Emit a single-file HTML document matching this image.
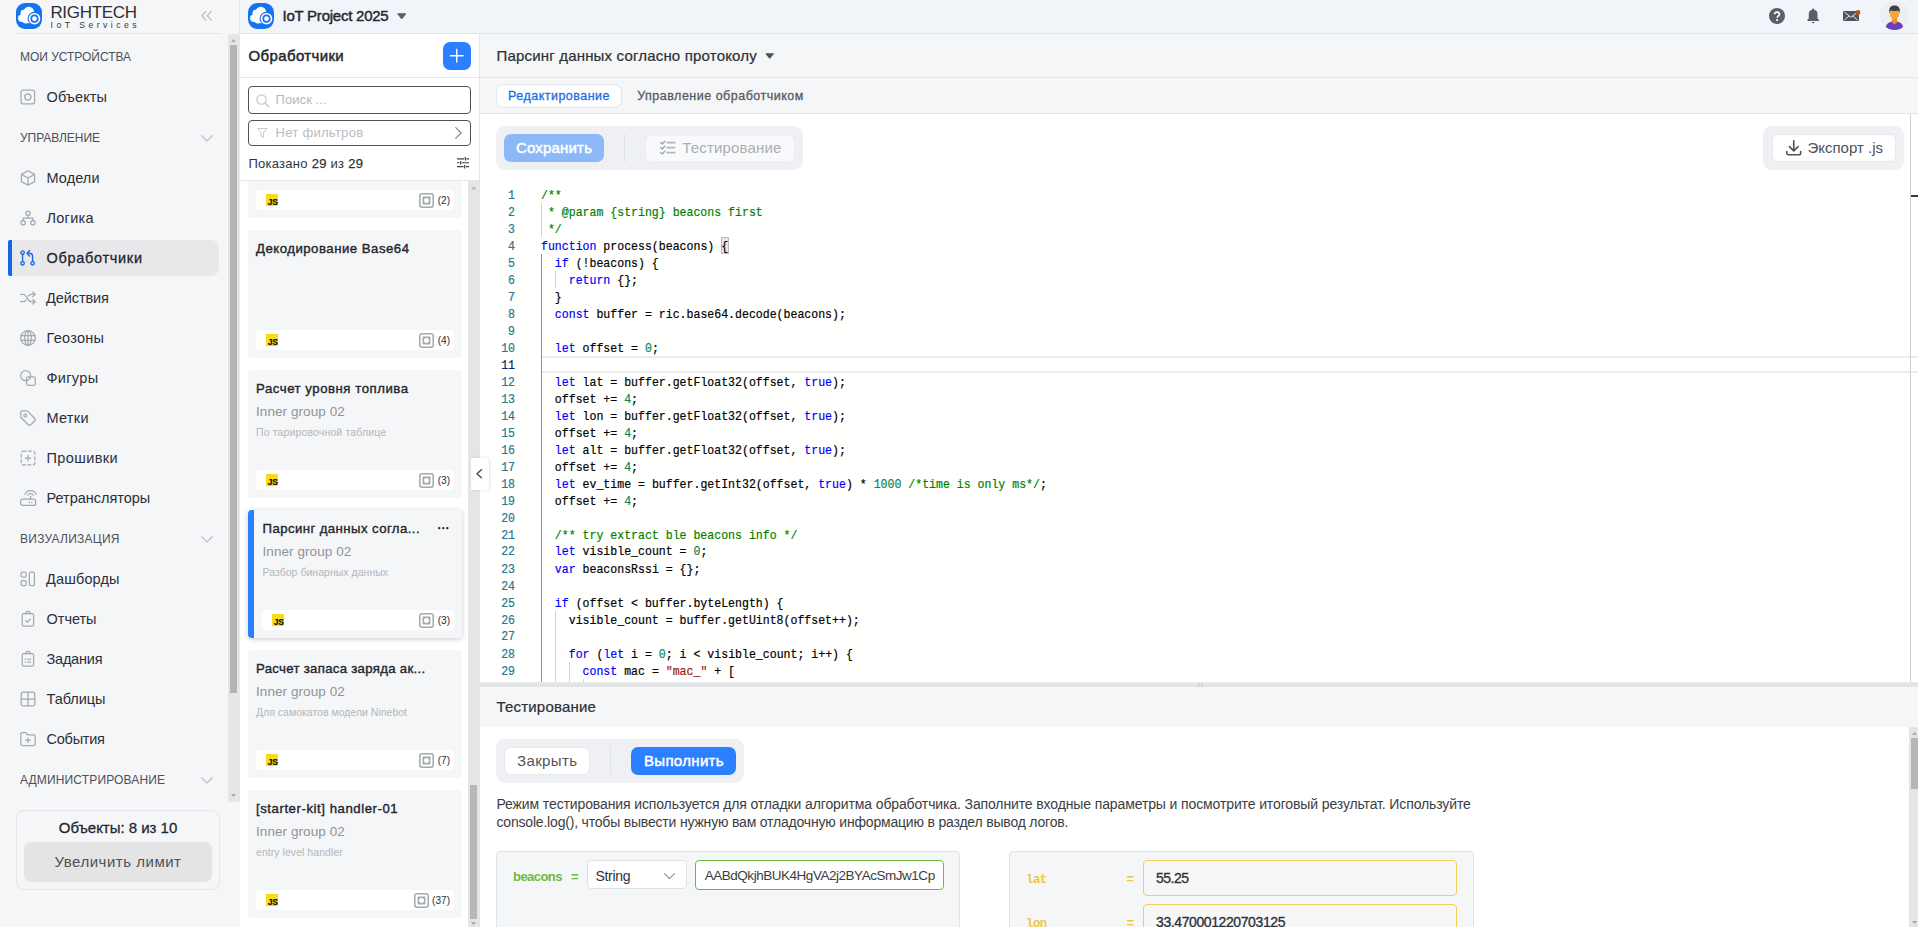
<!DOCTYPE html><html lang="ru"><head>
<meta charset="utf-8">
<title>IoT Project 2025</title>
<style>
*{box-sizing:border-box;margin:0;padding:0}
html,body{width:1918px;height:927px;overflow:hidden;background:#fff}
body{font-family:"Liberation Sans",sans-serif;color:#2b2f38;position:relative;font-size:14px}
.abs{position:absolute}
.t{position:absolute;white-space:nowrap;line-height:1}
svg{display:block;overflow:visible}
/* ---------- sidebar ---------- */
#side{position:absolute;left:0;top:0;width:240px;height:927px;background:#f5f6f8}
.sec{position:absolute;left:20px;font-size:12px;color:#4c5058;white-space:nowrap;line-height:14px;height:14px;transform:scaleY(1.09);transform-origin:0 50%}
.nav{position:absolute;left:46.5px;font-size:14.5px;color:#2b2f38;white-space:nowrap;line-height:16px;height:16px}
.ico{position:absolute;left:20px;width:16px;height:16px;fill:none;stroke:#a4a9af;stroke-width:1.25;stroke-linecap:round;stroke-linejoin:round}
.chev{position:absolute;left:201px;width:12px;height:7px;fill:none;stroke:#bfc3c9;stroke-width:1.3;stroke-linecap:round;stroke-linejoin:round}
/* ---------- topbar ---------- */
#top{position:absolute;left:240px;top:0;width:1678px;height:34px;background:#f1f5f9;border-bottom:1px solid #e2e5e8}
/* ---------- list column ---------- */
#col{position:absolute;left:240px;top:34px;width:240px;height:893px;background:#fff}
.card{position:absolute;left:8px;width:214px;height:127.600px;background:#f5f6f8;border-radius:4px}
.card .ttl{position:absolute;left:8px;top:11px;font-size:13.200px;-webkit-text-stroke:.38px #23262d;color:#23262d;white-space:nowrap;line-height:15px}
.card .grp{position:absolute;left:8px;top:34px;font-size:13.5px;color:#8e9399;white-space:nowrap;line-height:15px}
.card .dsc{position:absolute;left:8px;top:57px;font-size:10.500px;color:#b3b7bc;white-space:nowrap;line-height:11px}
.card .ft{position:absolute;left:8px;right:8px;top:100.250px;height:20px;background:#fff;border-radius:4px}
.card .js{position:absolute;left:10px;top:4px;width:12px;height:12px;background:#f5de19;overflow:hidden}
.card .js b{position:absolute;right:.6px;bottom:.9px;font-size:8.400px;line-height:6.500px;font-weight:bold;color:#111;letter-spacing:-.35px;-webkit-text-stroke:.2px #111}
.card .cnt{position:absolute;right:4px;top:4.500px;font-size:10.100px;line-height:12px;color:#2b2f38;white-space:nowrap}
.card .oi{position:absolute;margin-left:.5px;top:2.800px;width:15px;height:15px;fill:none;stroke:#a3a9ad;stroke-width:1.500}
/* ---------- main ---------- */
#main{position:absolute;left:480px;top:34px;width:1438px;height:893px;background:#fff}
.code{position:absolute;left:0;top:1.100px;transform:scaleY(1.09);transform-origin:0 0;font-family:"Liberation Mono",monospace;font-size:11.565px;line-height:15.596px;white-space:pre;color:#000}
.code,.ln{-webkit-text-stroke-width:.18px}
.k{color:#0000ff}.c{color:#008000}.n{color:#098658}.s{color:#a31515}
.ln{position:absolute;width:35px;left:0;text-align:right;transform:scaleY(1.09);transform-origin:0 0;font-family:"Liberation Mono",monospace;font-size:11.565px;line-height:15.596px;color:#237893;white-space:pre}
.g{position:absolute;width:1px;background:#d3d3d3}
.ga{position:absolute;width:1px;background:#939393}
</style>
</head>
<body>

<!-- ======================= SIDEBAR ======================= -->
<div id="side">
  <!-- logo -->
  <svg class="abs" style="left:16px;top:3px" width="26" height="26" viewBox="0 0 26 26">
    <rect x="0" y="0" width="26" height="26" rx="9" fill="#1673f0"></rect>
    <g fill="#fff"><circle cx="5.800" cy="15.300" r="3.700"></circle><circle cx="7.800" cy="10" r="3.300"></circle><circle cx="12.800" cy="9" r="5.300"></circle><circle cx="10" cy="16.400" r="4.200"></circle><circle cx="14" cy="16" r="4.600"></circle></g>
    <circle cx="18.500" cy="15.700" r="6.900" fill="#1673f0"></circle>
    <circle cx="18.500" cy="15.700" r="4.950" fill="none" stroke="#fff" stroke-width="1.700"></circle>
    <circle cx="18.500" cy="15.700" r="2.400" fill="#fff"></circle>
  </svg>
  <div class="t" style="left: 50.4px; top: 3.6px; font-size: 17px; color: rgb(44, 47, 54); letter-spacing: -0.31px;">RIGHTECH</div>
  <div class="t" style="left: 50.6px; top: 20.7px; font-size: 8.6px; color: rgb(51, 54, 61); letter-spacing: 3.49px;">IoT Services</div>
  <div class="abs" style="left:16px;top:33px;width:206px;height:1px;background:#e3e5e8"></div>
  <svg class="abs" style="left:201.300px;top:10.800px;fill:none;stroke:#b9bdc4;stroke-width:1.2;stroke-linecap:round;stroke-linejoin:round" width="11" height="9.5" viewBox="0 0 11 9.5"><path d="M4.8 .5L.8 4.75l4 4.25M10.2 .5l-4 4.25l4 4.250"></path></svg>

  <!-- scrollbar -->
  <div class="abs" style="left:228px;top:34px;width:12px;height:768px;background:#e5e6e8"></div>
  <div class="abs" style="left:239px;top:0;width:1px;height:34px;background:#e3e6ea"></div>
  <div class="abs" style="left:230px;top:45px;width:7px;height:648px;background:#b4b4b6"></div>
  <svg class="abs" style="left:231px;top:39px" width="5" height="3" viewBox="0 0 5 3"><path d="M0 3L2.5 0L5 3z" fill="#b0b1b3"></path></svg>
  <svg class="abs" style="left:231px;top:794px" width="5" height="3" viewBox="0 0 5 3"><path d="M0 0L2.5 3L5 0z" fill="#a9a9ab"></path></svg>

  <div class="sec" style="top: 49.5px; letter-spacing: -0.03px;">МОИ УСТРОЙСТВА</div>

  <svg class="ico" style="top:89px" viewBox="0 0 16 16"><rect x="1" y="1.200" width="13.6" height="13.6" rx="2"></rect><circle cx="7.8" cy="8" r="3.1"></circle></svg>
  <div class="nav" style="top: 89px; letter-spacing: 0.11px;">Объекты</div>

  <div class="sec" style="top: 130.5px; letter-spacing: -0.06px;">УПРАВЛЕНИЕ</div>
  <svg class="chev" style="top:134.500px" viewBox="0 0 12 7"><path d="M.7 .7L6 6L11.300 .7"></path></svg>

  <svg class="ico" style="top:169.500px" viewBox="0 0 16 16"><path d="M8 .8L14.600 4.400V11.600L8 15.200L1.400 11.600V4.400zM1.600 4.500L8 8L14.400 4.500M8 8V15"></path></svg>
  <div class="nav" style="top: 169.5px; letter-spacing: 0.08px;">Модели</div>

  <svg class="ico" style="top:209.500px" viewBox="0 0 16 16"><circle cx="8" cy="3.200" r="2.200"></circle><circle cx="3.100" cy="12.700" r="2.200"></circle><circle cx="12.900" cy="12.700" r="2.200"></circle><path d="M8 5.400V8M3.100 10.500V8H12.900V10.500"></path></svg>
  <div class="nav" style="top: 209.5px; letter-spacing: 0.26px;">Логика</div>

  <!-- active -->
  <div class="abs" style="left:8px;top:240px;width:211px;height:36px;background:#e8e8ea;border-radius:3px 8px 8px 3px"></div>
  <div class="abs" style="left:8px;top:240px;width:4px;height:36px;background:#1565e6;border-radius:2px 0 0 2px"></div>
  <svg class="ico" style="top:250px;stroke:#1a6ae6;stroke-width:1.4" viewBox="0 0 16 16"><circle cx="2.600" cy="2.600" r="1.700"></circle><circle cx="2.600" cy="13.300" r="1.700"></circle><circle cx="12.600" cy="13.300" r="1.700"></circle><path d="M2.600 4.300V11.600M12.600 11.600V6.500a3.200 3.200 0 0 0-3.200-3.200H7.200M9.600 .6L7 3.300L9.600 6"></path></svg>
  <div class="nav" style="top: 249.5px; color: rgb(35, 38, 45); letter-spacing: 0.7px;"><span style="-webkit-text-stroke:0.3px #23262d">Обработчики</span></div>

  <svg class="ico" style="top:289.500px" viewBox="0 0 16 16"><path d="M.6 4.300H3.200C6.600 4.300 7.400 11.700 11 11.700H15M.6 11.700H3.200C4.400 11.700 5.200 10.900 5.900 9.800M8.300 6.200C9 5.100 9.800 4.300 11 4.300H15M12.800 2L15.200 4.300L12.800 6.600M12.800 9.400L15.200 11.700L12.800 14"></path></svg>
  <div class="nav" style="top: 289.5px; left: 46px; letter-spacing: -0.08px;">Действия</div>

  <svg class="ico" style="top:330px" viewBox="0 0 16 16"><circle cx="8" cy="8" r="7.300"></circle><ellipse cx="8" cy="8" rx="3.300" ry="7.300"></ellipse><path d="M.9 5.600H15.100M.9 10.400H15.100M8 .7V15.300"></path></svg>
  <div class="nav" style="top: 329.5px; letter-spacing: 0.28px;">Геозоны</div>

  <svg class="ico" style="top:369.500px" viewBox="0 0 16 16"><circle cx="5.700" cy="5.700" r="5"></circle><rect x="6.600" y="6.800" width="8.700" height="8.500" rx="1.800"></rect></svg>
  <div class="nav" style="top: 369.5px; letter-spacing: 0.32px;">Фигуры</div>

  <svg class="ico" style="top:409.500px" viewBox="0 0 16 16"><path d="M.8 2.600A1.700 1.700 0 0 1 2.500 .9H6.600a1.700 1.700 0 0 1 1.200 .5L14.700 8.300a1.700 1.700 0 0 1 0 2.400L10.700 14.700a1.700 1.700 0 0 1-2.400 0L1.300 7.800A1.700 1.700 0 0 1 .8 6.600z"></path><circle cx="5.300" cy="5.400" r="1.400"></circle></svg>
  <div class="nav" style="top: 409.5px; letter-spacing: 0.27px;">Метки</div>

  <svg class="ico" style="top:449.500px" viewBox="0 0 16 16"><rect x="1.200" y="1.200" width="13.600" height="13.600" rx="1.800" stroke-dasharray="3 2.440"></rect><path d="M8 5.300V10.700M5.300 8H10.700"></path></svg>
  <div class="nav" style="top: 449.5px; letter-spacing: 0.37px;">Прошивки</div>

  <svg class="ico" style="top:490px" viewBox="0 0 16 16"><rect x=".7" y="9.100" width="14.900" height="6.300" rx="2"></rect><path d="M10.600 9V6.300M5 4.400A6 6 0 0 1 16.200 4.400M7.900 5.200A3 3 0 0 1 13.300 5.200"></path><path d="M9.300 12.300h.01M11.900 12.300h.01" stroke-width="1.600"></path></svg>
  <div class="nav" style="top: 489.5px; letter-spacing: -0.02px;">Ретрансляторы</div>

  <div class="sec" style="top: 531.5px; letter-spacing: 0.25px;">ВИЗУАЛИЗАЦИЯ</div>
  <svg class="chev" style="top:535.500px" viewBox="0 0 12 7"><path d="M.7 .7L6 6L11.300 .7"></path></svg>

  <svg class="ico" style="top:571px" viewBox="0 0 16 16"><rect x="1.100" y="1.200" width="5" height="5" rx="1.400"></rect><rect x="1.100" y="9.600" width="5" height="5" rx="1.400"></rect><rect x="9.400" y="1.200" width="5" height="13.400" rx="1.400"></rect></svg>
  <div class="nav" style="top: 570.5px; left: 46px; letter-spacing: 0.14px;">Дашборды</div>

  <svg class="ico" style="top:610.500px" viewBox="0 0 16 16"><rect x="2.200" y="2.700" width="11.400" height="12.400" rx="1.700"></rect><path d="M5.600 2.700A2.300 2.300 0 0 1 10.200 2.700M5.600 9.600L7.300 11.200L10.500 7.900"></path></svg>
  <div class="nav" style="top: 610.5px; letter-spacing: -0.02px;">Отчеты</div>

  <svg class="ico" style="top:650.500px" viewBox="0 0 16 16"><rect x="2.200" y="2.700" width="11.400" height="12.400" rx="1.700"></rect><path d="M5.600 2.700A2.300 2.300 0 0 1 10.200 2.700M7.600 8.200H10.600M7.600 11.200H10.600"></path><path d="M5.300 8.200h.01M5.300 11.200h.01" stroke-width="1.500"></path></svg>
  <div class="nav" style="top: 650.5px; letter-spacing: -0.22px;">Задания</div>

  <svg class="ico" style="top:690.500px" viewBox="0 0 16 16"><rect x="1.200" y="1.200" width="13.600" height="13.600" rx="1.800"></rect><path d="M8 1.200V14.800M1.200 8H14.800"></path></svg>
  <div class="nav" style="top: 690.5px; letter-spacing: -0.04px;">Таблицы</div>

  <svg class="ico" style="top:730.500px" viewBox="0 0 16 16"><path d="M.8 3.200A1.700 1.700 0 0 1 2.500 1.500H5.600L7.600 3.800H13.500A1.700 1.700 0 0 1 15.200 5.500V12.800A1.700 1.700 0 0 1 13.500 14.500H2.500A1.700 1.700 0 0 1 .8 12.800zM8 6.800V11.600M5.600 9.200H10.400"></path></svg>
  <div class="nav" style="top: 730.5px; letter-spacing: -0.23px;">События</div>

  <div class="sec" style="top: 772.5px; letter-spacing: 0.15px;">АДМИНИСТРИРОВАНИЕ</div>
  <svg class="chev" style="top:776.500px" viewBox="0 0 12 7"><path d="M.7 .7L6 6L11.300 .7"></path></svg>

  <!-- limit box -->
  <div class="abs" style="left:16px;top:810px;width:204px;height:79.500px;border:1px solid #e3e5e8;border-radius:8px"></div>
  <div class="t" style="left: 58.75px; top: 820px; font-size: 15px; color: rgb(35, 38, 45); line-height: 16px; -webkit-text-stroke: 0.28px rgb(35, 38, 45); letter-spacing: -0.02px;">Объекты: 8 из 10</div>
  <div class="abs" style="left:24px;top:842px;width:188px;height:39.500px;background:#e4e4e5;border-radius:7px"></div>
  <div class="t" style="left: 54.5px; top: 853.5px; font-size: 15px; color: rgb(77, 81, 89); line-height: 16px; letter-spacing: 0.52px;">Увеличить лимит</div>
</div>

<!-- ======================= TOP BAR ======================= -->
<div id="top">
  <svg class="abs" style="left:8px;top:3px" width="26" height="26" viewBox="0 0 26 26">
    <rect x="0" y="0" width="26" height="26" rx="9.500" fill="#1673f0"></rect>
    <g fill="#fff"><circle cx="5.800" cy="15.300" r="3.700"></circle><circle cx="7.800" cy="10" r="3.300"></circle><circle cx="12.800" cy="9" r="5.300"></circle><circle cx="10" cy="16.400" r="4.200"></circle><circle cx="14" cy="16" r="4.600"></circle></g>
    <circle cx="18.500" cy="15.700" r="6.900" fill="#1673f0"></circle>
    <circle cx="18.500" cy="15.700" r="4.950" fill="none" stroke="#fff" stroke-width="1.700"></circle>
    <circle cx="18.500" cy="15.700" r="2.400" fill="#fff"></circle>
  </svg>
  <div class="t" style="left: 42.5px; top: 8px; font-size: 15px; color: rgb(35, 38, 45); line-height: 16px; -webkit-text-stroke: 0.42px rgb(35, 38, 45); letter-spacing: -0.24px;">IoT Project 2025</div>
  <svg class="abs" style="left:157px;top:12.900px" width="9.500" height="6.200" viewBox="0 0 9.500 6.200"><path d="M1 .3H8.500Q9.500 .5 8.900 1.300L5.400 5.700Q4.750 6.400 4.100 5.700L.6 1.300Q0 .5 1 .3z" fill="#5b6068"></path></svg>

  <!-- right icons -->
  <svg class="abs" style="left:1529px;top:8px" width="16" height="16" viewBox="0 0 16 16"><circle cx="8" cy="8" r="8" fill="#5a6069"></circle><path d="M5.600 6.300A2.400 2.400 0 0 1 8 4.100C9.500 4.100 10.500 5 10.500 6.200C10.500 7.800 8.300 7.900 8.100 9.700" fill="none" stroke="#fff" stroke-width="1.700"></path><circle cx="8.100" cy="12.100" r="1.050" fill="#fff"></circle></svg>
  <svg class="abs" style="left:1566.700px;top:7.600px" width="12.300" height="16.500" viewBox="0 0 13 17"><path d="M6.500 .3A1.100 1.100 0 0 1 7.600 1.500A4.500 4.500 0 0 1 11.100 6V10.500L12.600 12.400V13.500H.4V12.400L1.900 10.500V6A4.500 4.500 0 0 1 5.400 1.500A1.100 1.100 0 0 1 6.500 .3zM5 14.500H8A1.500 1.500 0 0 1 5 14.500z" fill="#5a6069"></path></svg>
  <svg class="abs" style="left:1603px;top:9px" width="19" height="13" viewBox="0 0 19 13"><rect x="0" y="2" width="16" height="10" rx="1" fill="#4f555e"></rect><path d="M1.500 3.200L8 8.300L14.500 3.200M1.500 11L6.200 6.900M14.500 11L9.800 6.900" fill="none" stroke="#f1f5f9" stroke-width=".9"></path><circle cx="15" cy="3.500" r="2.400" fill="#b4551f"></circle></svg>
  <div class="abs" style="left:1640px;top:1px;width:29px;height:29px;border-radius:50%;background:#eceef1;overflow:hidden">
    <svg width="29" height="29" viewBox="0 0 29 29"><path d="M5.500 29C5.500 23 9 20.300 14.500 20.300S23.500 23 23.500 29z" fill="#6a3fc4"></path><path d="M12 17H17V21.500L14.500 23.200L12 21.500z" fill="#e8902c"></path><ellipse cx="14.500" cy="12.800" rx="4.700" ry="5.600" fill="#f7a63e"></ellipse><path d="M9.300 12.500C8.500 7 10.500 4.500 14.500 4.500S20.500 7 19.700 12.500C19.300 10.300 18.600 9.700 17.500 9.500C15.500 10.300 12.500 10.300 11.200 9.500C10.200 9.800 9.700 10.500 9.300 12.500z" fill="#3b3f48"></path></svg>
  </div>
</div>

<!-- ======================= LIST COLUMN ======================= -->
<div id="col">
  <div class="t" style="left: 8.5px; top: 13.5px; font-size: 15px; color: rgb(35, 38, 45); line-height: 16px; -webkit-text-stroke: 0.45px rgb(35, 38, 45); letter-spacing: 0.37px;">Обработчики</div>
  <div class="abs" style="left:202.750px;top:8px;width:28px;height:28px;border-radius:7px;background:#2b80ff"></div>
  <svg class="abs" style="left:210px;top:15.250px" width="13.500" height="13.500" viewBox="0 0 13.500 13.500"><path d="M6.750 .4V13.100M.4 6.750H13.100" stroke="#fff" stroke-width="1.400" stroke-linecap="round" fill="none"></path></svg>
  <div class="abs" style="left:0;top:43px;width:239px;height:1px;background:#e6e8eb"></div>
  <div class="abs" style="left:239px;top:0;width:1px;height:147px;background:#e4e6e8"></div>
  <div class="abs" style="left:8px;top:52px;width:223px;height:27.500px;border:1px solid #4d525a;border-radius:4px;background:#fff"></div>
  <svg class="abs" style="left:16px;top:59.500px" width="13.500" height="13.500" viewBox="0 0 13.500 13.500"><circle cx="5.500" cy="5.500" r="4.700" fill="none" stroke="#c6c9ce" stroke-width="1.200"></circle><path d="M9 9L12.800 12.800" stroke="#c6c9ce" stroke-width="1.300" stroke-linecap="round"></path></svg>
  <div class="t" style="left: 35.6px; top: 57.6px; font-size: 13px; color: rgb(180, 184, 190); line-height: 16px; letter-spacing: 0.06px;">Поиск ...</div>
  <div class="abs" style="left:8px;top:86px;width:223px;height:26px;border:1px solid #4d525a;border-radius:4px;background:#fff"></div>
  <svg class="abs" style="left:17px;top:94px" width="10.600" height="10" viewBox="0 0 10.600 10"><path d="M.5 .5H10.100L6.500 4.800V9.300L4.100 8V4.800z" fill="none" stroke="#c6c9ce" stroke-width="1" stroke-linejoin="round"></path></svg>
  <div class="t" style="left: 35.6px; top: 91.4px; font-size: 13px; color: rgb(185, 188, 194); line-height: 16px; letter-spacing: 0.28px;">Нет фильтров</div>
  <svg class="abs" style="left:214.700px;top:93px" width="7" height="12" viewBox="0 0 7 12"><path d="M.7 .7L6.200 6L.7 11.300" fill="none" stroke="#7d828a" stroke-width="1.100" stroke-linecap="round" stroke-linejoin="round"></path></svg>
  <div class="t" style="left: 8.4px; top: 123px; font-size: 13px; color: rgb(47, 52, 60); line-height: 14px; letter-spacing: 0.27px;">Показано <span style="-webkit-text-stroke:.25px #2f343c">29</span> из <span style="-webkit-text-stroke:.25px #2f343c">29</span></div>
  <svg class="abs" style="left:217px;top:123px" width="12" height="11.500" viewBox="0 0 12 11.500"><path d="M0 1.800H7M9.500 1.800H12M8.300 0V3.600M0 5.750H2.500M5 5.750H12M3.700 4V7.500M0 9.700H6.500M9 9.700H12M7.700 7.900V11.500" fill="none" stroke="#3c4047" stroke-width="1.200"></path></svg>
  <div class="abs" style="left:0;top:146px;width:240px;height:1px;background:#e6e8eb"></div>
  <div class="abs" style="left:0;top:147px;width:228px;height:746px;overflow:hidden"><div class="abs" style="left:0;top:-147px;width:228px;height:893px">
    <div class="card" style="top:56px">
    <div class="ft" style="left:8px">
    <div class="js"><b>JS</b></div>
    <svg class="oi" style="left:162.2px" viewBox="0 0 15 15"><rect x=".8" y=".8" width="13.400" height="13.400" rx="2.200"></rect><path d="M3.600 3.600h7.800v7.800h-7.800zM7.500 4.900a2.600 2.600 0 1 0 .001 0z" fill="#a3a9ad" stroke="none" fill-rule="evenodd"></path></svg>
    <div class="cnt">(2)</div>
    </div></div>
    <div class="card" style="top:196px">
    <div class="ttl" style="left: 8px; letter-spacing: 0.5px;">Декодирование Base64</div>
    <div class="ft" style="left:8px">
    <div class="js"><b>JS</b></div>
    <svg class="oi" style="left:162.2px" viewBox="0 0 15 15"><rect x=".8" y=".8" width="13.400" height="13.400" rx="2.200"></rect><path d="M3.600 3.600h7.800v7.800h-7.800zM7.500 4.900a2.600 2.600 0 1 0 .001 0z" fill="#a3a9ad" stroke="none" fill-rule="evenodd"></path></svg>
    <div class="cnt">(4)</div>
    </div></div>
    <div class="card" style="top:336px">
    <div class="ttl" style="left: 8px; letter-spacing: 0.53px;">Расчет уровня топлива</div>
    <div class="grp" style="left: 8px; letter-spacing: 0.07px;">Inner group 02</div>
    <div class="dsc" style="left: 8px; letter-spacing: 0.14px;">По тарировочной таблице</div>
    <div class="ft" style="left:8px">
    <div class="js"><b>JS</b></div>
    <svg class="oi" style="left:162.2px" viewBox="0 0 15 15"><rect x=".8" y=".8" width="13.400" height="13.400" rx="2.200"></rect><path d="M3.600 3.600h7.800v7.800h-7.800zM7.500 4.900a2.600 2.600 0 1 0 .001 0z" fill="#a3a9ad" stroke="none" fill-rule="evenodd"></path></svg>
    <div class="cnt">(3)</div>
    </div></div>
    <div class="card" style="top:476px;box-shadow:0 1px 5px rgba(0,0,0,.22);background:#f5f6f8">
    <div class="abs" style="left:0;top:0;width:6px;height:127.600px;background:#2b80ff;border-radius:4px 0 0 4px"></div>
    <div class="ttl" style="left: 14.5px; letter-spacing: 0.42px;">Парсинг данных согла...</div>
    <div class="grp" style="left: 14.5px; letter-spacing: 0.07px;">Inner group 02</div>
    <div class="dsc" style="left: 14.5px; letter-spacing: 0.03px;">Разбор бинарных данных</div>
    <svg class="abs" style="left:190.400px;top:17px" width="10.600" height="2.400" viewBox="0 0 10.600 2.400"><circle cx="1.200" cy="1.200" r="1.150" fill="#1d1f24"></circle><circle cx="5.300" cy="1.200" r="1.150" fill="#1d1f24"></circle><circle cx="9.400" cy="1.200" r="1.150" fill="#1d1f24"></circle></svg>
    <div class="ft" style="left:14px">
    <div class="js"><b>JS</b></div>
    <svg class="oi" style="left:156.2px" viewBox="0 0 15 15"><rect x=".8" y=".8" width="13.400" height="13.400" rx="2.200"></rect><path d="M3.600 3.600h7.800v7.800h-7.800zM7.500 4.900a2.600 2.600 0 1 0 .001 0z" fill="#a3a9ad" stroke="none" fill-rule="evenodd"></path></svg>
    <div class="cnt">(3)</div>
    </div></div>
    <div class="card" style="top:616px">
    <div class="ttl" style="left: 8px; letter-spacing: 0.3px;">Расчет запаса заряда ак...</div>
    <div class="grp" style="left: 8px; letter-spacing: 0.07px;">Inner group 02</div>
    <div class="dsc" style="left: 8px; letter-spacing: 0px;">Для самокатов модели Ninebot</div>
    <div class="ft" style="left:8px">
    <div class="js"><b>JS</b></div>
    <svg class="oi" style="left:162.2px" viewBox="0 0 15 15"><rect x=".8" y=".8" width="13.400" height="13.400" rx="2.200"></rect><path d="M3.600 3.600h7.800v7.800h-7.800zM7.500 4.900a2.600 2.600 0 1 0 .001 0z" fill="#a3a9ad" stroke="none" fill-rule="evenodd"></path></svg>
    <div class="cnt">(7)</div>
    </div></div>
    <div class="card" style="top:756px">
    <div class="ttl" style="left: 8px; letter-spacing: 0.55px;">[starter-kit] handler-01</div>
    <div class="grp" style="left: 8px; letter-spacing: 0.07px;">Inner group 02</div>
    <div class="dsc" style="left: 8px; letter-spacing: 0.05px;">entry level handler</div>
    <div class="ft" style="left:8px">
    <div class="js"><b>JS</b></div>
    <svg class="oi" style="left:157.0px" viewBox="0 0 15 15"><rect x=".8" y=".8" width="13.400" height="13.400" rx="2.200"></rect><path d="M3.600 3.600h7.800v7.800h-7.800zM7.500 4.900a2.600 2.600 0 1 0 .001 0z" fill="#a3a9ad" stroke="none" fill-rule="evenodd"></path></svg>
    <div class="cnt">(37)</div>
    </div></div>
  </div></div>
  <div class="abs" style="left:228px;top:147px;width:12px;height:746px;background:#e4e5e7"></div>
  <svg class="abs" style="left:231px;top:151.500px" width="5.400" height="3.400" viewBox="0 0 5.400 3.400"><path d="M0 3.400L2.700 0L5.400 3.400z" fill="#b9babd"></path></svg>
  <svg class="abs" style="left:231.400px;top:888px" width="5" height="3.200" viewBox="0 0 5.400 3.400"><path d="M0 0L2.700 3.400L5.400 0z" fill="#a9aaad"></path></svg>
  <div class="abs" style="left:230px;top:751px;width:7px;height:134px;background:#b6b7b9"></div>
</div>
<div class="abs" style="left:471px;top:458px;width:18px;height:32px;background:#fff;border-radius:0 4px 4px 0;box-shadow:1px 0 3px rgba(0,0,0,.12);z-index:5"></div>
<svg class="abs" style="left:475.900px;top:469px;z-index:6" width="6.200" height="9.600" viewBox="0 0 6.200 9.600"><path d="M5.400 .8L1 4.800L5.400 8.800" fill="none" stroke="#474c54" stroke-width="1.500" stroke-linecap="round" stroke-linejoin="round"></path></svg>
<!-- ======================= MAIN ======================= -->
<div id="main">
  <div class="abs" style="left:0;top:0;width:1438px;height:43.500px;background:#f5f6f8;border-bottom:1px solid #e3e5e8"></div>
  <div class="t" style="left: 16.5px; top: 13px; font-size: 15px; color: rgb(45, 48, 54); line-height: 17px; -webkit-text-stroke: 0.22px rgb(45, 48, 54); letter-spacing: 0.18px;">Парсинг данных согласно протоколу</div>
  <svg class="abs" style="left:285.3px;top:19.3px" width="9.400" height="5.800" viewBox="0 0 9.500 6.200"><path d="M1 .3H8.500Q9.500 .5 8.900 1.300L5.400 5.700Q4.750 6.400 4.100 5.700L.6 1.300Q0 .5 1 .3z" fill="#4b5057"></path></svg>
  <div class="abs" style="left:0;top:44px;width:1438px;height:35.500px;background:#f5f6f8;border-bottom:1px solid #e3e5e8"></div>
  <div class="abs" style="left:16px;top:50.400px;width:125.500px;height:24px;background:#fff;border:1px solid #e4e6e9;border-radius:8px"></div>
  <div class="t" style="left: 28px; top: 55.1px; font-size: 12.5px; color: rgb(27, 111, 224); line-height: 15px; -webkit-text-stroke: 0.3px rgb(27, 111, 224); letter-spacing: 0.48px;">Редактирование</div>
  <div class="t" style="left: 157.2px; top: 55.1px; font-size: 12.5px; color: rgb(86, 91, 98); line-height: 15px; -webkit-text-stroke: 0.3px rgb(86, 91, 98); letter-spacing: 0.5px;">Управление обработчиком</div>
  <div class="abs" style="left:16px;top:92px;width:307px;height:44px;background:#eef0f3;border-radius:9px"></div>
  <div class="abs" style="left:24px;top:100px;width:100px;height:28px;background:#8cb8f8;border-radius:7px"></div>
  <div class="t" style="left: 36px; top: 104.5px; font-size: 15px; color: rgb(255, 255, 255); line-height: 17px; -webkit-text-stroke: 0.5px rgb(255, 255, 255); letter-spacing: 0.18px;">Сохранить</div>
  <div class="abs" style="left:144px;top:100px;width:1px;height:28px;background:#dfe2e6"></div>
  <div class="abs" style="left:165px;top:100.600px;width:150px;height:27px;background:#f8f9fa;border:1px solid #eceef0;border-radius:6px"></div>
  <svg class="abs" style="left:179.8px;top:107.3px" width="16" height="13" viewBox="0 0 16 13"><path d="M6.600 1.700H15.300M6.600 6.700H15.300M6.600 11.700H15.300" stroke="#b4b6ba" stroke-width="1.800" fill="none"></path><path d="M.7 1.600L2.200 3L4.800 .2M.7 6.600L2.200 8L4.800 5.200M.7 11.600L2.200 13L4.800 10.200" stroke="#9fa6ab" stroke-width="1.400" fill="none" stroke-linecap="round" stroke-linejoin="round"></path></svg>
  <div class="t" style="left: 202.3px; top: 104.5px; font-size: 15px; color: rgb(170, 174, 180); line-height: 17px; letter-spacing: 0.17px;">Тестирование</div>
  <div class="abs" style="left:1283.2px;top:92px;width:141px;height:44px;background:#eef0f3;border-radius:9px"></div>
  <div class="abs" style="left:1292px;top:100px;width:124px;height:28px;background:#fff;border:1px solid #e6e8eb;border-radius:6px"></div>
  <svg class="abs" style="left:1306.3px;top:106px" width="15.500" height="15.500" viewBox="0 0 15.500 15.500"><path d="M7.750 .7V10.800M3.400 6.600L7.750 10.900L12.100 6.600M.8 11.600V13.100A1.700 1.700 0 0 0 2.500 14.800H13A1.700 1.700 0 0 0 14.700 13.100V11.600" fill="none" stroke="#4d525a" stroke-width="1.600" stroke-linecap="round" stroke-linejoin="round"></path></svg>
  <div class="t" style="left: 1327.4px; top: 104.5px; font-size: 15px; color: rgb(77, 82, 90); line-height: 17px; letter-spacing: 0.01px;">Экспорт .js</div>
  <!-- editor -->
  <div class="abs" style="left:0;top:152px;width:1438px;height:496px;overflow:hidden;background:#fffffe">
    <div class="abs" style="left:61px;top:170px;width:1377px;height:17px;border-top:2px solid #ececee;border-bottom:2px solid #ececee"></div>
    <div class="abs" style="left:240.900px;top:51px;width:7.900px;height:17px;background:#e4e4e4;border:1px solid #b9b9b9"></div>
    <div class="g" style="left:61.00px;top:17px;height:34px"></div>
    <div class="ga" style="left:61.00px;top:68px;height:442px"></div>
    <div class="g" style="left:74.84px;top:85px;height:17px"></div>
    <div class="g" style="left:74.84px;top:425px;height:85px"></div>
    <div class="g" style="left:88.68px;top:476px;height:34px"></div>
    <div class="g" style="left:102.52px;top:493px;height:17px"></div>
    <div class="ln" style="top:1.100px">1
2
3
4
5
6
7
8
9
10
<span style="color:#0b216f">11</span>
12
13
14
15
16
17
18
19
20
21
22
23
24
25
26
27
28
29</div>
    <div class="code" style="left:61px"><span class="c">/**</span>
<span class="c"> * @param {string} beacons first</span>
<span class="c"> */</span>
<span class="k">function</span> process(beacons) {
  <span class="k">if</span> (!beacons) {
    <span class="k">return</span> {};
  }
  <span class="k">const</span> buffer = ric.base64.decode(beacons);

  <span class="k">let</span> offset = <span class="n">0</span>;

  <span class="k">let</span> lat = buffer.getFloat32(offset, <span class="k">true</span>);
  offset += <span class="n">4</span>;
  <span class="k">let</span> lon = buffer.getFloat32(offset, <span class="k">true</span>);
  offset += <span class="n">4</span>;
  <span class="k">let</span> alt = buffer.getFloat32(offset, <span class="k">true</span>);
  offset += <span class="n">4</span>;
  <span class="k">let</span> ev_time = buffer.getInt32(offset, <span class="k">true</span>) * <span class="n">1000</span> <span class="c">/*time is only ms*/</span>;
  offset += <span class="n">4</span>;

  <span class="c">/** try extract ble beacons info */</span>
  <span class="k">let</span> visible_count = <span class="n">0</span>;
  <span class="k">var</span> beaconsRssi = {};

  <span class="k">if</span> (offset &lt; buffer.byteLength) {
    visible_count = buffer.getUint8(offset++);

    <span class="k">for</span> (<span class="k">let</span> i = <span class="n">0</span>; i &lt; visible_count; i++) {
      <span class="k">const</span> mac = <span class="s">"mac_"</span> + [</div>
  </div>
  <div class="abs" style="left:1430px;top:80px;width:1px;height:568px;background:#d0d0d0"></div>
  <div class="abs" style="left:1431px;top:160.5px;width:7px;height:2px;background:#3a3a3a"></div>
  <!-- splitter -->
  <div class="abs" style="left:0;top:648px;width:1438px;height:5px;background:linear-gradient(#ececee,#dfe1e4 60%,#e6e8ea)"></div>
  <svg class="abs" style="left:717.5px;top:648.5px" width="5" height="4" viewBox="0 0 5 4"><path d="M.5 .5h1v1h-1zM3.500 .5h1v1h-1zM.5 2.500h1v1h-1zM3.500 2.500h1v1h-1z" fill="#a8abb0"></path></svg>
  <!-- test panel -->
  <div class="abs" style="left:0;top:653px;width:1438px;height:40px;background:#f5f6f8"></div>
  <div class="t" style="left: 16.5px; top: 663.5px; font-size: 15px; color: rgb(45, 48, 54); line-height: 17px; -webkit-text-stroke: 0.22px rgb(45, 48, 54); letter-spacing: 0.19px;">Тестирование</div>
  <div class="abs" style="left:16px;top:705.3px;width:247.700px;height:43.700px;background:#eef0f3;border-radius:9px"></div>
  <div class="abs" style="left:24px;top:713px;width:86px;height:28px;background:#fff;border:1px solid #e6e8eb;border-radius:7px"></div>
  <div class="t" style="left: 37px; top: 717.7px; font-size: 15px; color: rgb(80, 85, 92); line-height: 17px; letter-spacing: 0.37px;">Закрыть</div>
  <div class="abs" style="left:130px;top:713px;width:1px;height:28px;background:#dfe2e6"></div>
  <div class="abs" style="left:151px;top:713px;width:104.800px;height:28px;background:#2b80ff;border-radius:7px"></div>
  <div class="t" style="left: 164px; top: 717.6px; font-size: 15px; color: rgb(255, 255, 255); line-height: 17px; -webkit-text-stroke: 0.5px rgb(255, 255, 255); letter-spacing: 0.32px;">Выполнить</div>
  <div class="t" style="left: 16.5px; top: 762.3px; font-size: 14px; color: rgb(58, 61, 66); line-height: 16px; letter-spacing: -0.12px;">Режим тестирования используется для отладки алгоритма обработчика. Заполните входные параметры и посмотрите итоговый результат. Используйте</div>
  <div class="t" style="left: 16.5px; top: 780.3px; font-size: 14px; color: rgb(58, 61, 66); line-height: 16px; letter-spacing: -0.19px;">console.log(), чтобы вывести нужную вам отладочную информацию в раздел вывод логов.</div>
  <div class="abs" style="left:16.2px;top:817.2px;width:464.200px;height:90px;background:#f5f6f8;border:1px solid #dfe2e6;border-radius:4px"></div>
  <div class="t" style="left: 33px; top: 834.5px; font-size: 13px; font-weight: bold; color: rgb(108, 187, 60); line-height: 15px; letter-spacing: -0.56px;">beacons</div>
  <div class="t" style="left:91px;top:835px;font-size:13px;font-weight:bold;color:#6cbb3c;line-height:15px">=</div>
  <div class="abs" style="left:107px;top:826.3px;width:99.700px;height:29.200px;background:#fff;border:1px solid #dfe2e6;border-radius:4px"></div>
  <div class="t" style="left: 115.5px; top: 833.5px; font-size: 14px; color: rgb(47, 50, 55); line-height: 16px; letter-spacing: -0.32px;">String</div>
  <svg class="abs" style="left:184px;top:838.5px" width="11" height="6.500" viewBox="0 0 11 6.500"><path d="M.6 .6L5.500 5.700L10.400 .6" fill="none" stroke="#8a8f96" stroke-width="1.100" stroke-linecap="round" stroke-linejoin="round"></path></svg>
  <div class="abs" style="left:215px;top:826px;width:249px;height:29.500px;background:#fff;border:1.500px solid #6cbb3c;border-radius:4px"></div>
  <div class="t" style="left: 224.7px; top: 833.5px; font-size: 13.5px; color: rgb(58, 61, 66); line-height: 16px; letter-spacing: -0.47px;">AABdQkjhBUK4HgVA2j2BYAcSmJw1Cp</div>
  <div class="abs" style="left:529px;top:817.2px;width:465px;height:90px;background:#f5f6f8;border:1px solid #dfe2e6;border-radius:4px"></div>
  <div class="t" style="left: 546px; top: 838.8px; font-family: &quot;Liberation Mono&quot;, monospace; font-size: 12.4px; font-weight: bold; color: rgb(240, 198, 63); line-height: 14px; letter-spacing: -0.51px;">lat</div>
  <div class="t" style="left:646.5px;top:838.8px;font-family:'Liberation Mono',monospace;font-size:12.400px;font-weight:bold;color:#f0c63f;line-height:14px">=</div>
  <div class="abs" style="left:663px;top:826px;width:313.600px;height:35.500px;background:#f7f7f8;border:1px solid #f0cf5a;border-radius:4px"></div>
  <div class="t" style="left: 676px; top: 835.8px; font-size: 14px; color: rgb(43, 47, 56); line-height: 16px; -webkit-text-stroke: 0.3px rgb(43, 47, 56); letter-spacing: -0.51px;">55.25</div>
  <div class="t" style="left: 546px; top: 882.8px; font-family: &quot;Liberation Mono&quot;, monospace; font-size: 12.4px; font-weight: bold; color: rgb(240, 198, 63); line-height: 14px; letter-spacing: -0.51px;">lon</div>
  <div class="t" style="left:646.5px;top:882.8px;font-family:'Liberation Mono',monospace;font-size:12.400px;font-weight:bold;color:#f0c63f;line-height:14px">=</div>
  <div class="abs" style="left:663px;top:870px;width:313.600px;height:35.500px;background:#f7f7f8;border:1px solid #f0cf5a;border-radius:4px"></div>
  <div class="t" style="left: 676px; top: 879.8px; font-size: 14px; color: rgb(43, 47, 56); line-height: 16px; -webkit-text-stroke: 0.3px rgb(43, 47, 56); letter-spacing: -0.4px;">33.470001220703125</div>
  <div class="abs" style="left:1429px;top:693px;width:9px;height:200px;background:#e4e5e7"></div>
  <div class="abs" style="left:1431px;top:704px;width:7px;height:50.500px;background:#b6b7b9"></div>
  <svg class="abs" style="left:1431.700px;top:698px" width="5" height="3" viewBox="0 0 5 3"><path d="M0 3L2.500 0L5 3z" fill="#a9aaac"></path></svg>
  <svg class="abs" style="left:1431.5px;top:886.5px" width="5" height="3" viewBox="0 0 5 3"><path d="M0 0L2.500 3L5 0z" fill="#a3a3a5"></path></svg>
</div>


</body></html>
